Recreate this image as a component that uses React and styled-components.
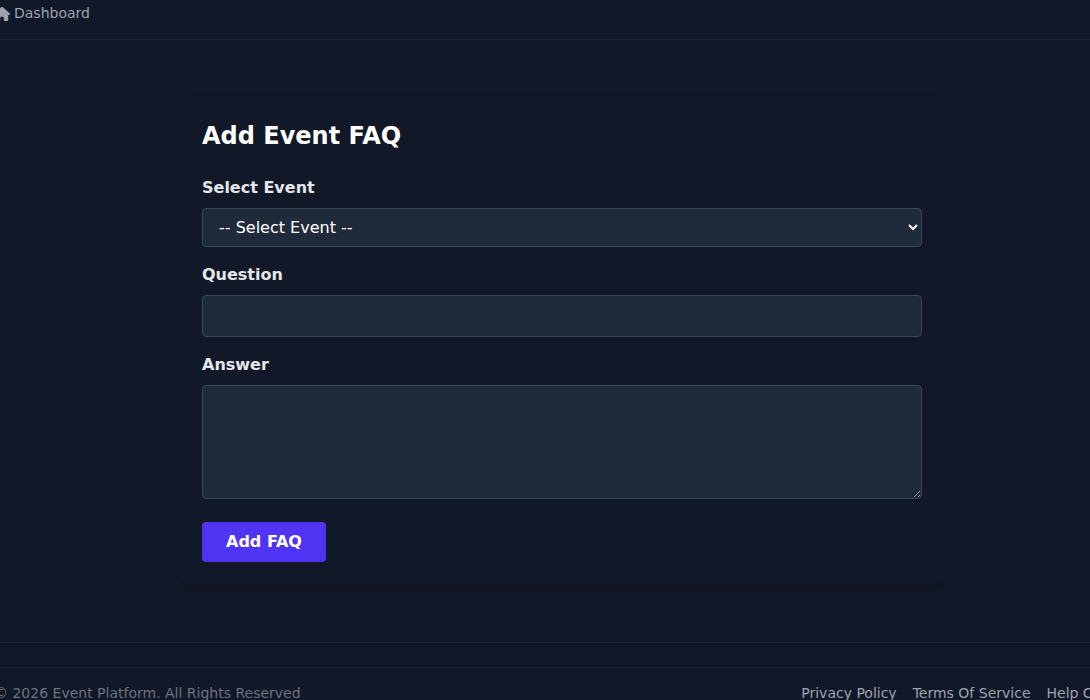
import styled, { createGlobalStyle } from "styled-components";
import { FaHouse } from "react-icons/fa6";

const GlobalStyle = createGlobalStyle`
  html, body {
    margin: 0;
    padding: 0;
    height: 700px;
    overflow: hidden;
    background: #0f172a;
  }
  * {
    box-sizing: border-box;
  }
  body {
    font-family: "DejaVu Sans", sans-serif;
    font-size: 14px;
    color: #e2e8f0;
  }
`;

const Page = styled.div`
  width: 1090px;
  height: 700px;
  overflow: hidden;
  background: #111827;
`;

const TopBar = styled.nav`
  height: 40px;
  border-bottom: 1px solid #1a2333;
  display: flex;
  align-items: flex-start;
  margin-left: -6px;
  padding-top: 5px;
`;

const NavLink = styled.a`
  display: flex;
  align-items: center;
  gap: 4px;
  color: #9ca3af;
  font-size: 14px;
  line-height: 17px;
  text-decoration: none;
`;

const Main = styled.main`
  display: flex;
  justify-content: center;
  width: 1124px;
  padding: 60px 0 57px;
  border-bottom: 1px solid #1a2333;
`;

const Card = styled.section`
  width: 764px;
  padding: 20px 22px 23px;
  border-radius: 8px;
  background: #111827;
  box-shadow: 0 4px 12px rgba(0, 0, 0, 0.15);
`;

const Title = styled.h1`
  margin: 0 0 25px;
  font-size: 24px;
  line-height: 33px;
  font-weight: 700;
  color: #ffffff;
`;

const Field = styled.div`
  margin-bottom: 18px;
`;

const Label = styled.label`
  display: block;
  margin-bottom: 11px;
  font-size: 16px;
  line-height: 19px;
  font-weight: 700;
  color: #e5e7eb;
`;

const controlStyle = `
  display: block;
  width: 720px;
  border: 1px solid #3a4556;
  border-radius: 4px;
  background: #1f2a3a;
  color: #ffffff;
  font-family: "DejaVu Sans", sans-serif;
  font-size: 16px;
`;

const Select = styled.select`
  ${controlStyle}
  height: 39px;
  padding: 0 12px;
`;

const Input = styled.input`
  ${controlStyle}
  height: 42px;
  padding: 0 16px;
`;

const TextArea = styled.textarea`
  ${controlStyle}
  height: 114px;
  padding: 10px 16px;
`;

const SubmitButton = styled.button`
  display: block;
  width: 124px;
  height: 40px;
  margin-top: 23px;
  padding: 0 0 2px;
  border: 0;
  border-radius: 4px;
  background: #4f35f3;
  color: #ffffff;
  font-family: "DejaVu Sans", sans-serif;
  font-size: 16px;
  font-weight: 700;
`;

const Footer = styled.footer`
  margin-top: 24px;
  border-top: 1px solid #1a2333;
  height: 40px;
  display: flex;
  justify-content: space-between;
  align-items: flex-start;
  margin-left: -6px;
  margin-right: -40px;
  padding-top: 17px;
  font-size: 14px;
  line-height: 17px;
`;

const Copyright = styled.span`
  color: #6b7280;
`;

const FooterLinks = styled.div`
  display: flex;
  gap: 16px;
`;

const FooterLink = styled.a`
  color: #9ca3af;
  text-decoration: none;
`;

export default function App() {
  return (
    <Page>
      <GlobalStyle />
      <TopBar>
        <NavLink href="#">
          <FaHouse size={16} />
          Dashboard
        </NavLink>
      </TopBar>
      <Main>
        <Card>
          <Title>Add Event FAQ</Title>
          <Field>
            <Label>Select Event</Label>
            <Select defaultValue="">
              <option value="">-- Select Event --</option>
            </Select>
          </Field>
          <Field>
            <Label>Question</Label>
            <Input type="text" />
          </Field>
          <Field>
            <Label>Answer</Label>
            <TextArea />
          </Field>
          <SubmitButton type="button">Add FAQ</SubmitButton>
        </Card>
      </Main>
      <Footer>
        <Copyright>© 2026 Event Platform. All Rights Reserved</Copyright>
        <FooterLinks>
          <FooterLink href="#">Privacy Policy</FooterLink>
          <FooterLink href="#">Terms Of Service</FooterLink>
          <FooterLink href="#">Help Center</FooterLink>
        </FooterLinks>
      </Footer>
    </Page>
  );
}
